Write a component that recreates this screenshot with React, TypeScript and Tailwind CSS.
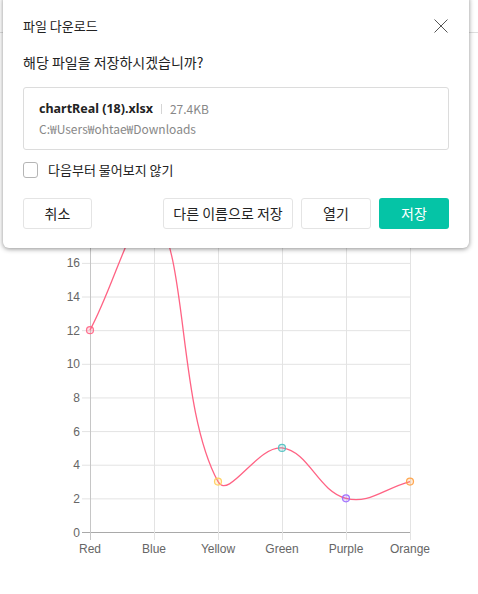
const LABELS = ["Red", "Blue", "Yellow", "Green", "Purple", "Orange"];
const VALUES = [12, 19, 3, 5, 2, 3];
const POINT_COLORS = [
  "255,99,132",
  "54,162,235",
  "255,206,86",
  "75,192,192",
  "153,102,255",
  "255,159,64",
];

const LEFT = 90;
const RIGHT = 410;
const BOTTOM = 532;
const STEP = 16.82;
const TOP = BOTTOM - 20 * STEP;

const px = (i: number) => LEFT + i * 64;
const py = (v: number) => BOTTOM - v * STEP;

function clamp(v: number, lo: number, hi: number) {
  return Math.max(lo, Math.min(hi, v));
}

// chart.js style bezier (tension 0.4)
function linePath() {
  const pts = VALUES.map((v, i) => ({ x: px(i), y: py(v) }));
  const t = 0.4;
  const ctrl = pts.map((cur, i) => {
    const prev = pts[i - 1] || cur;
    const next = pts[i + 1] || cur;
    const d01 = Math.hypot(cur.x - prev.x, cur.y - prev.y);
    const d12 = Math.hypot(next.x - cur.x, next.y - cur.y);
    const s01 = d01 / (d01 + d12) || 0;
    const s12 = d12 / (d01 + d12) || 0;
    const fa = t * s01;
    const fb = t * s12;
    return {
      px: clamp(cur.x - fa * (next.x - prev.x), LEFT, RIGHT),
      py: clamp(cur.y - fa * (next.y - prev.y), TOP, BOTTOM),
      nx: clamp(cur.x + fb * (next.x - prev.x), LEFT, RIGHT),
      ny: clamp(cur.y + fb * (next.y - prev.y), TOP, BOTTOM),
    };
  });
  let d = `M${pts[0].x} ${pts[0].y}`;
  for (let i = 1; i < pts.length; i++) {
    d += ` C${ctrl[i - 1].nx} ${ctrl[i - 1].ny} ${ctrl[i].px} ${ctrl[i].py} ${pts[i].x} ${pts[i].y}`;
  }
  return d;
}

function Chart() {
  const ticks = [0, 2, 4, 6, 8, 10, 12, 14, 16, 18, 20];
  return (
    <svg width={478} height={561} className="block" style={{ fontFamily: "'Liberation Sans', Arial, sans-serif" }}>
      <g transform="translate(0,-33)">
        {ticks.map((v) => (
          <g key={v}>
            <line
              x1={82}
              x2={RIGHT}
              y1={py(v) + 0.5}
              y2={py(v) + 0.5}
              stroke={v === 0 ? "#a9a9a9" : "#e3e3e3"}
              strokeWidth={1}
            />
            <text x={80} y={py(v) + 4.5} textAnchor="end" fontSize={12} fill="#666">
              {v}
            </text>
          </g>
        ))}
        {LABELS.map((l, i) => (
          <g key={l}>
            <line
              x1={px(i) + 0.5}
              x2={px(i) + 0.5}
              y1={TOP}
              y2={540}
              stroke={i === 0 ? "#c6c6c6" : "#e3e3e3"}
              strokeWidth={1}
            />
            <text x={px(i)} y={553} textAnchor="middle" fontSize={12} fill="#666">
              {l}
            </text>
          </g>
        ))}
        <path d={linePath()} fill="none" stroke="rgb(255,99,132)" strokeWidth={1.3} />
        {VALUES.map((v, i) => (
          <circle
            key={i}
            cx={px(i)}
            cy={py(v)}
            r={3.5}
            fill={`rgba(${POINT_COLORS[i]},0.2)`}
            stroke={`rgba(${POINT_COLORS[i]},0.9)`}
            strokeWidth={1.2}
          />
        ))}
      </g>
    </svg>
  );
}

function Btn({ children, className }: { children: React.ReactNode; className: string }) {
  return (
    <button
      className={
        "flex h-[31px] items-center justify-center rounded-[3px] text-[14px] " + className
      }
    >
      {children}
    </button>
  );
}

export default function App() {
  return (
    <div className="relative h-[594px] w-[478px] overflow-hidden bg-white">
      <div className="h-[33px] border-b border-[#dedede]" />
      <Chart />

      <div
        className="absolute left-[3px] top-[-6px] h-[254px] w-[466px] rounded-[6px] bg-white px-5 pt-[6px] text-[#222] shadow-[0_1px_5px_rgba(0,0,0,0.45)]"
        style={{ fontFamily: "'Noto Sans CJK KR', 'Noto Sans', sans-serif" }}
      >
        <div className="flex h-[40px] items-center justify-between pt-[12px]">
          <span className="text-[13px] text-[#222]">파일 다운로드</span>
          <svg width="14" height="14" viewBox="0 0 14 14" className="mr-px text-[#555]">
            <path d="M0.5 0.5 L13.5 13.5 M13.5 0.5 L0.5 13.5" stroke="currentColor" strokeWidth="1" fill="none" />
          </svg>
        </div>
        <p className="mt-[9px] text-[14px] leading-[26px] text-[#222]">
          해당 파일을 저장하시겠습니까?
        </p>
        <div className="mt-[12px] h-[63px] rounded-[3px] border border-[#dcdcdc] px-[15px] pt-[10px]">
          <div className="flex items-center leading-[22px]">
            <span
              className="text-[12.5px] font-bold text-[#222]"
              style={{ fontFamily: "'Noto Sans', 'Noto Sans CJK KR', sans-serif" }}
            >
              chartReal (18).xlsx
            </span>
            <span className="mx-[8px] h-[10px] w-px bg-[#d5d5d5]" />
            <span className="text-[12px] text-[#888]">27.4KB</span>
          </div>
          <div className="text-[12px] leading-[18px] text-[#888]">C:₩Users₩ohtae₩Downloads</div>
        </div>
        <label className="mt-[11px] flex h-[17px] items-center gap-[10px]">
          <span className="h-[16px] w-[15px] rounded-[3px] border border-[#b5b5b5] bg-white" />
          <span className="text-[13px] text-[#222]">다음부터 물어보지 않기</span>
        </label>
        <div className="mt-[20px] flex items-center justify-between">
          <Btn className="w-[69px] border border-[#e4e4e4] bg-white text-[#222]">취소</Btn>
          <div className="flex gap-[8px]">
            <Btn className="w-[130px] border border-[#e4e4e4] bg-white text-[#222]">다른 이름으로 저장</Btn>
            <Btn className="w-[70px] border border-[#e4e4e4] bg-white text-[#222]">열기</Btn>
            <Btn className="w-[70px] bg-[#05c4a6] text-white">저장</Btn>
          </div>
        </div>
      </div>
    </div>
  );
}
